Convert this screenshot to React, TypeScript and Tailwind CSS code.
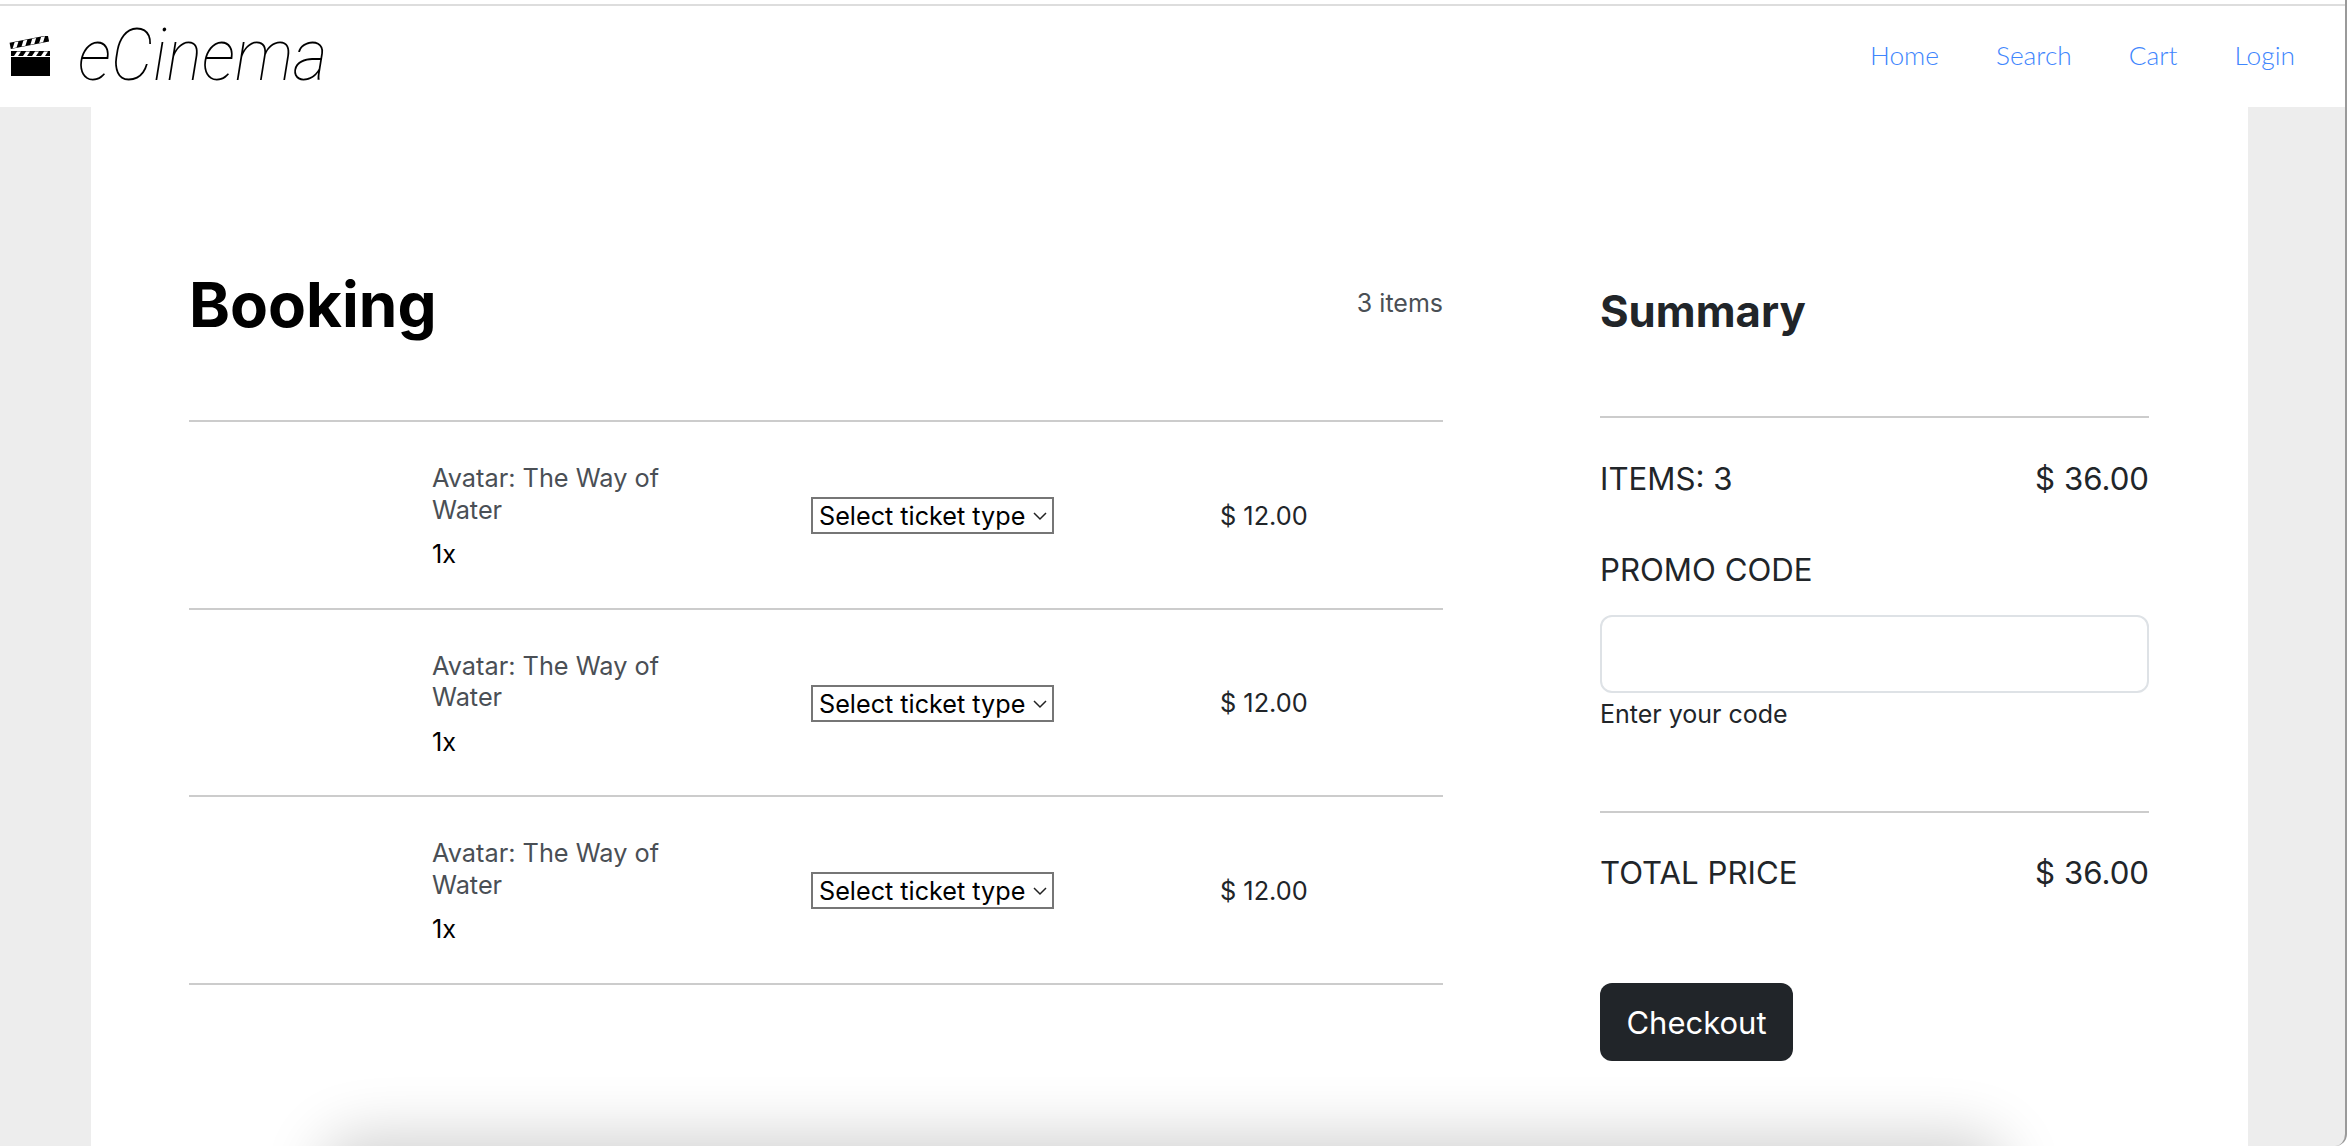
import React from "react";

function Clapper() {
  return (
    <svg width="44" height="42" viewBox="0 0 44 42" className="block">
      <g transform="rotate(-11 3 14)">
        <rect x="3" y="6.500" width="39" height="6.500" fill="#000" />
        <path d="M8 7h4l-3 5.500H5zM17 7h4l-3 5.500h-4zM26 7h4l-3 5.500h-4zM35 7h4l-3 5.500h-4z" fill="#fff" />
      </g>
      <rect x="3" y="15" width="39" height="25" fill="#000" />
      <path d="M3 20.500h39" stroke="#fff" strokeWidth="1" />
      <path d="M9 15.500h4l-3 4.500h-4zM18 15.500h4l-3 4.500h-4zM27 15.500h4l-3 4.500h-4zM36 15.500h4l-3 4.500h-4z" fill="#fff" />
    </svg>
  );
}

function Line() {
  return <div className="h-[2px] bg-[#cccccc]" />;
}

function Row() {
  return (
    <div className="h-[187.500px] flex flex-col">
      <div className="flex-1 grid grid-cols-[243px_379px_409px_1fr] items-center">
        <div />
        <div className="w-[260px] pt-[2px]">
          <div className="text-[25.300px] leading-[31.500px] text-[#4a4f55]">Avatar: The Way of Water</div>
          <div className="text-[25.300px] leading-[31.500px] text-black mt-[13px]">1x</div>
        </div>
        <div className="relative w-[243px] h-[37px] mt-[2px]">
          <select className="w-full h-full border-2 border-[#767676] bg-white text-black text-[25.200px] leading-[31px] pl-[6px] pt-[2px] font-['Inter',sans-serif] appearance-none">
            <option>Select ticket type</option>
          </select>
          <svg width="16" height="10" viewBox="0 0 16 10" className="absolute right-[6px] top-[14px] pointer-events-none">
            <path d="M2 2l6 6 6-6" fill="none" stroke="#222" strokeWidth="1.500" />
          </svg>
        </div>
        <div className="text-[25.300px] text-[#212529] mt-[2px]">$ 12.00</div>
      </div>
      <Line />
    </div>
  );
}

function Stat({ left, right }: { left: string; right: string }) {
  return (
    <div className="flex justify-between text-[31.200px] leading-[46px] text-[#212529]">
      <span>{left}</span>
      <span>{right}</span>
    </div>
  );
}

export default function App() {
  const links = ["Home", "Search", "Cart", "Login"];
  return (
    <div className="w-full h-[1146px] overflow-hidden bg-[#ededed] flex flex-col font-['Inter',sans-serif] border-r-2 border-[#9a9a9a] rounded-br-[12px]">
      <header className="h-[107px] bg-white pt-[4px] shrink-0">
        <div className="h-[103px] border-t-2 border-[#dddddd] flex items-center justify-between pl-[8px] pr-[50px]">
          <div className="flex items-center">
            <Clapper />
            <span className="ml-[26px] text-[73px] leading-[72px] italic font-thin text-black font-['Roboto',sans-serif] origin-left scale-x-[0.92] mt-[-3px]">eCinema</span>
          </div>
          <nav className="flex gap-[57px] text-[26.300px] font-light text-[#3f86fd] font-['Lato',sans-serif] mt-[-2px]">
            {links.map((l) => (
              <span key={l}>{l}</span>
            ))}
          </nav>
        </div>
      </header>

      <main className="mx-[91px] w-[2157px] flex-1 bg-white pl-[98px] flex flex-col">
        <div className="flex">
          <section className="w-[1254px] shrink-0">
            <div className="h-[313px] pt-[160px] flex justify-between items-start">
              <h1 className="text-[62px] leading-[75px] font-bold text-black">Booking</h1>
              <span className="text-[25px] leading-[38px] text-[#4a4f55] mt-[17px]">3 items</span>
            </div>
            <Line />
            <Row />
            <Row />
            <Row />
          </section>

          <aside className="w-[549px] ml-[157px] shrink-0">
            <div className="h-[309px] pt-[171px]">
              <h2 className="text-[43.700px] leading-[68px] font-bold text-[#212529]">Summary</h2>
            </div>
            <Line />
            <div className="mt-[38px]">
              <Stat left="ITEMS: 3" right="$ 36.00" />
            </div>
            <div className="mt-[45px] text-[31.200px] leading-[46px] text-[#212529]">PROMO CODE</div>
            <input className="mt-[22px] block w-full h-[78px] border-2 border-[#dee2e6] rounded-[12px] bg-white" />
            <div className="mt-[2px] text-[25px] leading-[38px] text-[#212529]">Enter your code</div>
            <div className="mt-[78px]">
              <Line />
            </div>
            <div className="mt-[37px]">
              <Stat left="TOTAL PRICE" right="$ 36.00" />
            </div>
            <button className="mt-[87px] block w-[193px] h-[78px] pt-[2px] rounded-[12px] bg-[#212529] text-white text-[31px]">Checkout</button>
          </aside>
        </div>
        <div className="mt-[94px] ml-[152px] w-[1645px] h-[60px] shrink-0 rounded-[20px] shadow-[0_0_60px_20px_rgba(0,0,0,0.18)]" />
      </main>
    </div>
  );
}
